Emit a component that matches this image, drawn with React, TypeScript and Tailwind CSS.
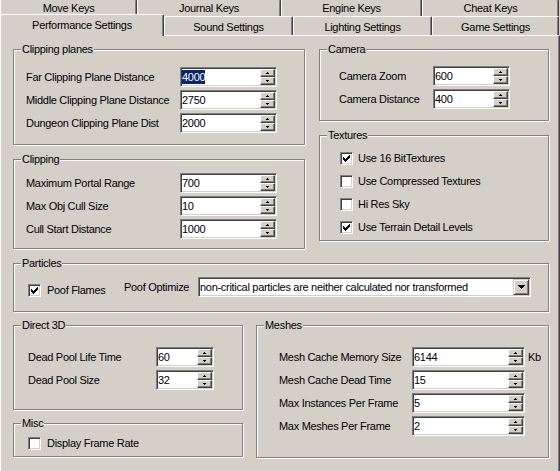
import React from "react";

type Field = { label: string; value: string; selected?: boolean };

const sunken =
  "border border-t-[#808080] border-l-[#808080] border-r-white border-b-white bg-white p-[1px] shadow-[inset_1px_1px_0_#404040,inset_-1px_-1px_0_#d4d0c8]";

const raised =
  "border border-t-white border-l-white border-r-[#404040] border-b-[#404040] bg-[#d4d0c8] shadow-[inset_-1px_-1px_0_#808080]";

function SpinArrow({ down }: { down?: boolean }) {
  return (
    <svg width="3" height="2" viewBox="0 0 3 2" className="block" shapeRendering="crispEdges">
      {down ? (
        <>
          <rect x="0" y="0" width="3" height="1" />
          <rect x="1" y="1" width="1" height="1" />
        </>
      ) : (
        <>
          <rect x="1" y="0" width="1" height="1" />
          <rect x="0" y="1" width="3" height="1" />
        </>
      )}
    </svg>
  );
}

function SpinEdit({ value, width, selected }: { value: string; width: string; selected?: boolean }) {
  return (
    <div className={`flex h-[20px] shrink-0 ${sunken} ${width}`}>
      <div className="flex flex-1 items-center">
        <span className={selected ? "bg-[#0a246a] leading-[14px] text-white" : "leading-[14px]"}>{value}</span>
      </div>
      <div className="flex flex-col">
        <div className={`flex h-[8px] w-[15px] items-center justify-center ${raised}`}>
          <SpinArrow />
        </div>
        <div className={`flex h-[8px] w-[15px] items-center justify-center ${raised}`}>
          <SpinArrow down />
        </div>
      </div>
    </div>
  );
}

function Check({ checked }: { checked?: boolean }) {
  return (
    <div className={`h-[13px] w-[13px] shrink-0 ${sunken}`}>
      {checked && (
        <svg width="9" height="9" viewBox="0 0 9 9" className="block" shapeRendering="crispEdges">
          <rect x="1" y="3" width="1" height="3" />
          <rect x="2" y="4" width="1" height="3" />
          <rect x="3" y="5" width="1" height="3" />
          <rect x="4" y="4" width="1" height="3" />
          <rect x="5" y="3" width="1" height="3" />
          <rect x="6" y="2" width="1" height="3" />
          <rect x="7" y="1" width="1" height="3" />
        </svg>
      )}
    </div>
  );
}

function Group({ title, className, children }: { title: string; className: string; children?: React.ReactNode }) {
  return (
    <fieldset className={`shrink-0 border border-[#808080] shadow-[1px_1px_0_#fff,inset_1px_1px_0_#fff] ${className}`}>
      <legend className="ml-[7px] bg-[#d4d0c8] px-[1px] leading-[13px]">{title}</legend>
      {children}
    </fieldset>
  );
}

function Tab({ label, className }: { label: string; className: string }) {
  return (
    <div
      className={`flex shrink-0 items-center justify-center rounded-t-[2px] border-l border-t border-r border-l-white border-t-white border-r-[#404040] bg-[#d4d0c8] shadow-[inset_-1px_0_0_#808080] ${className}`}
    >
      {label}
    </div>
  );
}

const clippingPlanes: Field[] = [
  { label: "Far Clipping Plane Distance", value: "4000", selected: true },
  { label: "Middle Clipping Plane Distance", value: "2750" },
  { label: "Dungeon Clipping Plane Dist", value: "2000" },
];

const clipping: Field[] = [
  { label: "Maximum Portal Range", value: "700" },
  { label: "Max Obj Cull Size", value: "10" },
  { label: "Cull Start Distance", value: "1000" },
];

const camera: Field[] = [
  { label: "Camera Zoom", value: "600" },
  { label: "Camera Distance", value: "400" },
];

const textures = [
  { label: "Use 16 BitTextures", checked: true },
  { label: "Use Compressed Textures", checked: false },
  { label: "Hi Res Sky", checked: false },
  { label: "Use Terrain Detail Levels", checked: true },
];

const direct3d: Field[] = [
  { label: "Dead Pool Life Time", value: "60" },
  { label: "Dead Pool Size", value: "32" },
];

const meshes: Field[] = [
  { label: "Mesh Cache Memory Size", value: "6144" },
  { label: "Mesh Cache Dead Time", value: "15" },
  { label: "Max Instances Per Frame", value: "5" },
  { label: "Max Meshes Per Frame", value: "2" },
];

export default function App() {
  return (
    <div className="flex h-[471px] w-[560px] flex-col overflow-hidden bg-[#d4d0c8] font-['Liberation_Sans',Arial,sans-serif] text-[11px] tracking-[-0.3px] text-black">
      {/* back row of tabs */}
      <div className="flex h-[16px] items-end">
        <Tab label="Move Keys" className="h-[17px] w-[137px] pt-[1px]" />
        <Tab label="Journal Keys" className="h-[17px] w-[144px] pt-[1px]" />
        <Tab label="Engine Keys" className="h-[17px] w-[141px] pt-[1px]" />
        <Tab label="Cheat Keys" className="h-[17px] w-[137px] pt-[1px]" />
      </div>
      {/* front row of tabs */}
      <div className="flex h-[19px] items-end">
        <Tab label="Performance Settings" className="relative top-[1px] z-10 h-[22px] w-[164px]" />
        <Tab label="Sound Settings" className="h-[19px] w-[129px] pt-[2px]" />
        <Tab label="Lighting Settings" className="h-[19px] w-[139px] pt-[2px]" />
        <Tab label="Game Settings" className="h-[19px] w-[127px] pt-[2px]" />
      </div>

      <div className="flex flex-1 flex-col border-l border-t border-r border-l-white border-t-white border-r-[#404040] pl-[12px] pt-[7px] shadow-[inset_-1px_0_0_#808080]">
        <div className="flex gap-[14px]">
          <div className="flex flex-col gap-[8px]">
            <Group title="Clipping planes" className="h-[102px] w-[292px]">
              <div className="flex flex-col gap-[3px] pl-[12px] pt-[11px]">
                {clippingPlanes.map((f) => (
                  <div key={f.label} className="flex items-center">
                    <span className="w-[154px]">{f.label}</span>
                    <SpinEdit value={f.value} selected={f.selected} width="w-[97px]" />
                  </div>
                ))}
              </div>
            </Group>
            <Group title="Clipping" className="h-[96px] w-[292px]">
              <div className="flex flex-col gap-[3px] pl-[12px] pt-[7px]">
                {clipping.map((f) => (
                  <div key={f.label} className="flex items-center">
                    <span className="w-[154px]">{f.label}</span>
                    <SpinEdit value={f.value} width="w-[97px]" />
                  </div>
                ))}
              </div>
            </Group>
          </div>
          <div className="flex flex-col gap-[8px]">
            <Group title="Camera" className="h-[78px] w-[230px]">
              <div className="flex flex-col gap-[3px] pl-[19px] pt-[10px]">
                {camera.map((f) => (
                  <div key={f.label} className="flex items-center">
                    <span className="w-[94px]">{f.label}</span>
                    <SpinEdit value={f.value} width="w-[77px]" />
                  </div>
                ))}
              </div>
            </Group>
            <Group title="Textures" className="h-[112px] w-[230px]">
              <div className="flex flex-col gap-[10px] pl-[20px] pt-[10px]">
                {textures.map((t) => (
                  <div key={t.label} className="flex h-[13px] items-center gap-[5px]">
                    <Check checked={t.checked} />
                    <span>{t.label}</span>
                  </div>
                ))}
              </div>
            </Group>
          </div>
        </div>

        <Group title="Particles" className="mt-[8px] h-[55px] w-[536px]">
          <div className="flex pl-[14px] pt-[7px]">
            <div className="mt-[7px] flex h-[13px] w-[96px] items-center gap-[6px]">
              <Check checked />
              <span>Poof Flames</span>
            </div>
            <span className="flex h-[20px] w-[74px] items-center">Poof Optimize</span>
            <div className={`flex h-[20px] w-[333px] ${sunken}`}>
              <div className="flex flex-1 items-center leading-[14px]">
                non-critical particles are neither calculated nor transformed
              </div>
              <div className="flex h-[16px] w-[16px] items-center justify-center border border-t-[#d4d0c8] border-l-[#d4d0c8] border-r-[#404040] border-b-[#404040] bg-[#d4d0c8] shadow-[inset_1px_1px_0_#fff,inset_-1px_-1px_0_#808080]">
                <svg width="7" height="4" viewBox="0 0 7 4" className="block" shapeRendering="crispEdges">
                  <rect x="0" y="0" width="7" height="1" />
                  <rect x="1" y="1" width="5" height="1" />
                  <rect x="2" y="2" width="3" height="1" />
                  <rect x="3" y="3" width="1" height="1" />
                </svg>
              </div>
            </div>
          </div>
        </Group>

        <div className="mt-[7px] flex gap-[13px]">
          <div className="flex flex-col gap-[7px]">
            <Group title="Direct 3D" className="h-[91px] w-[230px]">
              <div className="flex flex-col gap-[3px] pl-[14px] pt-[15px]">
                {direct3d.map((f) => (
                  <div key={f.label} className="flex items-center">
                    <span className="w-[128px]">{f.label}</span>
                    <SpinEdit value={f.value} width="w-[58px]" />
                  </div>
                ))}
              </div>
            </Group>
            <Group title="Misc" className="h-[40px] w-[230px]">
              <div className="mt-[7px] flex h-[13px] items-center gap-[6px] pl-[14px]">
                <Check />
                <span>Display Frame Rate</span>
              </div>
            </Group>
          </div>
          <Group title="Meshes" className="h-[139px] w-[293px]">
            <div className="flex flex-col gap-[3px] pl-[22px] pt-[15px]">
              {meshes.map((f, i) => (
                <div key={f.label} className="flex items-center">
                  <span className="w-[133px]">{f.label}</span>
                  <SpinEdit value={f.value} width="w-[113px]" />
                  {i === 0 && <span className="ml-[3px]">Kb</span>}
                </div>
              ))}
            </div>
          </Group>
        </div>
      </div>
    </div>
  );
}
